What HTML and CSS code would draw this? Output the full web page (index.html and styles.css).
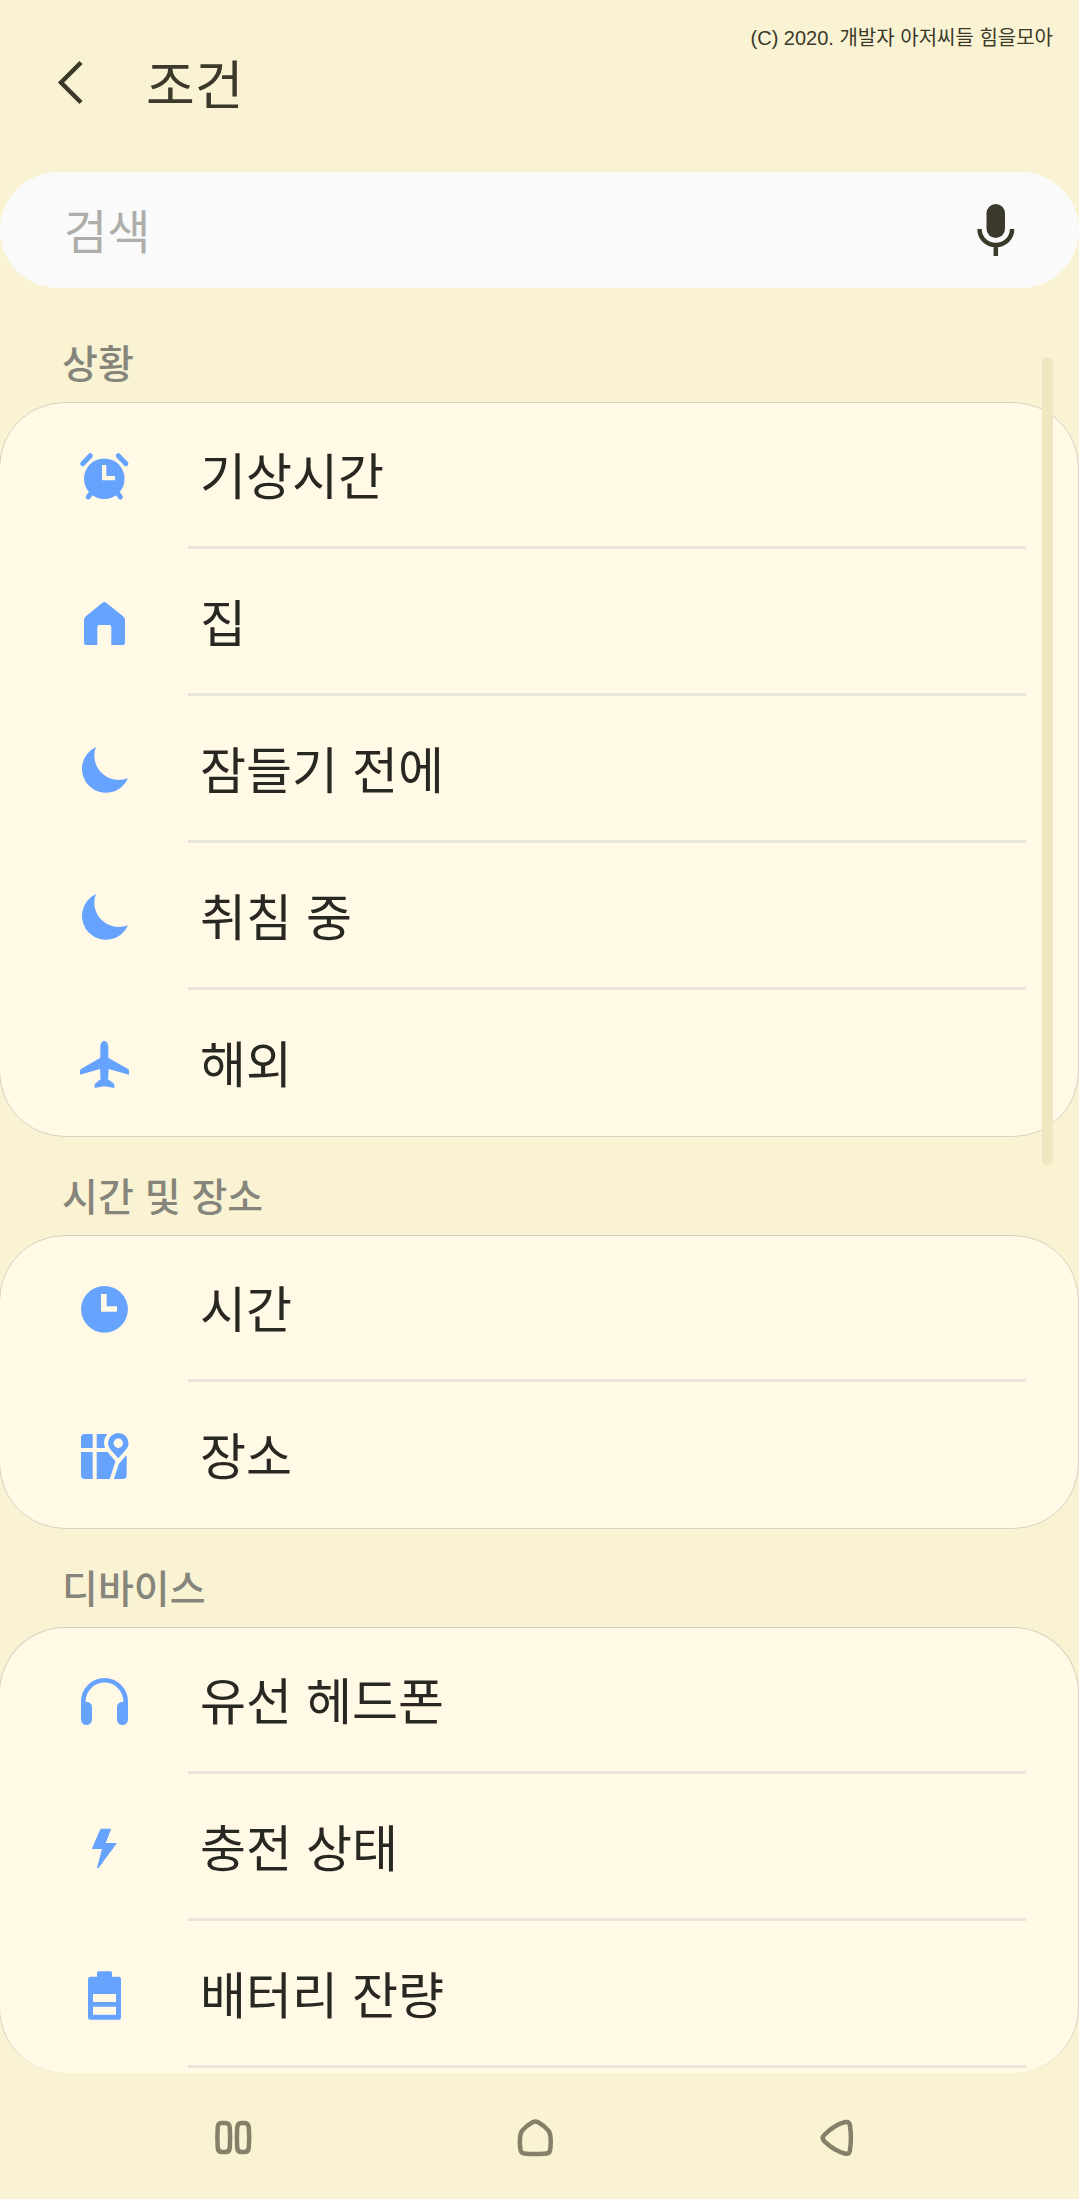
FILE: index.html
```html
<!DOCTYPE html>
<html lang="ko">
<head>
<meta charset="utf-8">
<meta name="viewport" content="width=device-width, initial-scale=1">
<title>조건</title>
<link rel="stylesheet" href="styles.css">
</head>
<body>
<header class="top-bar">
  <button class="icon-button" type="button" aria-label="뒤로">
    <svg class="icon" viewBox="0 0 54 54" aria-hidden="true"><path d="M38 7.500 18 27.500l20 20" fill="none" stroke="currentColor" stroke-width="4.500"/></svg>
  </button>
  <h1 class="title">조건</h1>
  <p class="copyright">(C) 2020. 개발자 아저씨들 힘을모아</p>
</header>

<form class="search" role="search">
  <input class="search-input" type="search" placeholder="검색" aria-label="검색">
  <button class="icon-button" type="button" aria-label="음성 검색">
    <svg class="icon" viewBox="0 0 54 54" aria-hidden="true">
      <rect x="17.500" y="1" width="18.500" height="34" rx="9.250" fill="currentColor"/>
      <path d="M10.500 26c0 9 7 16 16.300 16s16.300-7 16.300-16M26.800 42v11" fill="none" stroke="currentColor" stroke-width="4.500"/>
    </svg>
  </button>
</form>

<main class="list">
  <div class="scroll-thumb" aria-hidden="true"></div>

  <section>
    <h2 class="section-title">상황</h2>
    <ul class="card">
      <li class="row"><a class="row-link" href="#wake">
        <svg class="icon" viewBox="0 0 54 54" aria-hidden="true">
          <circle cx="27.300" cy="29.700" r="20.300" fill="currentColor"/>
          <path d="M5.700 14.700l7.600-8M48.900 14.700l-7.600-8M11.200 48l4.600-6M43.400 48l-4.600-6" stroke="currentColor" stroke-width="5" stroke-linecap="round"/>
          <path class="cutout" d="M25 16h4.300v11H38v4.300H25z"/>
        </svg><span class="row-text">기상시간</span></a></li>
      <li class="row"><a class="row-link" href="#home">
        <svg class="icon" viewBox="0 0 54 54" aria-hidden="true">
          <path fill="currentColor" d="M25.500 6.700q1.800-1.400 3.600 0l17 13.600q1.900 1.500 1.900 3.800V46.500q0 2.500-2.500 2.500H34.300V31q0-2-2-2h-10q-2 0-2 2v18H9.500Q7 49 7 46.500V24.100q0-2.300 1.900-3.800z"/>
        </svg><span class="row-text">집</span></a></li>
      <li class="row"><a class="row-link" href="#before-sleep">
        <svg class="icon" viewBox="0 0 54 54" aria-hidden="true"><path fill="currentColor" d="M18.900 4A24 24 0 1 0 51 35.300A24.500 24.500 0 0 1 18.900 4z"/></svg><span class="row-text">잠들기 전에</span></a></li>
      <li class="row"><a class="row-link" href="#sleeping">
        <svg class="icon" viewBox="0 0 54 54" aria-hidden="true"><path fill="currentColor" d="M18.900 4A24 24 0 1 0 51 35.300A24.500 24.500 0 0 1 18.900 4z"/></svg><span class="row-text">취침 중</span></a></li>
      <li class="row"><a class="row-link" href="#abroad">
        <svg class="icon" viewBox="0 0 54 54" aria-hidden="true"><path fill="currentColor" d="M27.300 4c2.300 0 4 2.500 4 6v10.700L51 32q1 .6 1 1.800v3.900L31.700 32 31 42.300l5.500 4q.9.700.9 1.700v3l-10.100-1.700L17.600 51v-3q0-1 .9-1.700l5.100-4L23 32 3 37.700v-3.900Q3 32.600 4 32l19.300-11.300V10c0-3.500 1.700-6 4-6z"/></svg><span class="row-text">해외</span></a></li>
    </ul>
  </section>

  <section>
    <h2 class="section-title">시간 및 장소</h2>
    <ul class="card">
      <li class="row"><a class="row-link" href="#time">
        <svg class="icon" viewBox="0 0 54 54" aria-hidden="true">
          <circle cx="27.500" cy="27.300" r="23.400" fill="currentColor"/>
          <path class="cutout" d="M24 12h5.700v12.300H40v5.400H24z"/>
        </svg><span class="row-text">시간</span></a></li>
      <li class="row"><a class="row-link" href="#place">
        <svg class="icon" viewBox="0 0 54 54" aria-hidden="true">
          <path fill="currentColor" d="M8 5h7.700v14H4V9q0-4 4-4zM19.700 5H33v14H19.700zM4 23h11.700v27H8q-4 0-4-4zM19.700 23H36l13.700 4v19q0 4-4 4h-26z"/>
          <path class="cutout-line" d="M41 30l-1 4-5.500 17"/>
          <path class="pin" d="M41.300 29.300C36 23 31 19 31 14.300a10.300 10.300 0 0 1 20.600 0C51.600 19 46.600 23 41.300 29.300z"/>
          <circle class="cutout" cx="41.300" cy="14.300" r="4.700"/>
        </svg><span class="row-text">장소</span></a></li>
    </ul>
  </section>

  <section>
    <h2 class="section-title">디바이스</h2>
    <ul class="card card-continued">
      <li class="row"><a class="row-link" href="#headphones">
        <svg class="icon" viewBox="0 0 54 54" aria-hidden="true">
          <path d="M6.300 40V27.500a21.200 21.200 0 0 1 42.400 0V40" fill="none" stroke="currentColor" stroke-width="4.600"/>
          <path fill="currentColor" d="M4 28h5.500q5.500 0 5.500 5.500v12a5.500 5.500 0 0 1-11 0zM51 28h-5.500q-5.500 0-5.500 5.500v12a5.500 5.500 0 0 0 11 0z"/>
        </svg><span class="row-text">유선 헤드폰</span></a></li>
      <li class="row"><a class="row-link" href="#charging">
        <svg class="icon" viewBox="0 0 54 54" aria-hidden="true"><path fill="currentColor" stroke="currentColor" stroke-width="1" stroke-linejoin="round" d="M23.800 8.200h9.700L28 22.500h11.200L21 47l-.5-.2L25.600 27.500H15.500z"/></svg><span class="row-text">충전 상태</span></a></li>
      <li class="row"><a class="row-link" href="#battery">
        <svg class="icon" viewBox="0 0 54 54" aria-hidden="true">
          <path fill="currentColor" d="M21.500 3.300h12q1.500 0 1.500 1.500v3.900h6.500q2.500 0 2.500 2.500v38q0 2.500-2.500 2.500h-28q-2.500 0-2.500-2.500v-38q0-2.500 2.500-2.500h6.500V4.800q0-1.500 1.500-1.500z"/>
          <path class="cutout" d="M16 26h23v8H16zM16 38.700h23v8H16z"/>
        </svg><span class="row-text">배터리 잔량</span></a></li>
    </ul>
  </section>
</main>

<nav class="system-nav" aria-label="시스템 탐색">
  <button class="icon-button" type="button" aria-label="최근 앱">
    <svg class="icon" viewBox="0 0 54 54" aria-hidden="true"><g fill="none" stroke="currentColor" stroke-width="4.500"><path d="M15 12q2.500 0 4.500 0 4 0 4.300 4.500.6 10 0 20-.3 4.500-4.300 4.500h-3.500q-4 0-4.300-4.500-.6-10 0-20 .3-4.500 3.300-4.500z"/><path d="M35.500 12h3q4 0 4.300 4.500.8 10 0 20-.3 4.500-4.300 4.500h-3q-4 0-4.300-4.500-.6-10 0-20 .3-4.500 4.300-4.500z"/></g></svg>
  </button>
  <button class="icon-button" type="button" aria-label="홈">
    <svg class="icon" viewBox="0 0 54 54" aria-hidden="true"><path fill="none" stroke="currentColor" stroke-width="4.500" stroke-linejoin="round" d="M24.500 11.300q2.800-1.500 5.600 0Q36 14.500 40.400 19.600 43 23 42.700 32q0 3.500-.6 7-.5 3-3.600 3.400-11.200 1.200-22.400 0-3.100-.4-3.600-3.400-.6-3.500-.6-7-.3-9 2.300-12.400Q18.600 14.500 24.500 11.300z"/></svg>
  </button>
  <button class="icon-button" type="button" aria-label="이전">
    <svg class="icon" viewBox="0 0 54 54" aria-hidden="true"><path fill="none" stroke="currentColor" stroke-width="4.500" stroke-linejoin="round" d="M35.500 11Q25 13.200 14.200 24q-2.900 3.100 0 6.200Q25 40.600 35.500 42.700q3.600.6 4.400-3 2-12.800 0-25.600-.8-3.700-4.400-3.100z"/></svg>
  </button>
</nav>
</body>
</html>
```

FILE: styles.css
```css
:root {
  --page: #faf3d3;
  --card: #fff9e6;
  --line: #d6d2c3;
  --divider: #e8e5df;
  --accent: #66a3ff;
  --heading: #3b392a;
  --text: #292722;
}

* {
  box-sizing: border-box;
}

body {
  margin: 0;
  background: var(--page);
  color: var(--text);
  font-family: "Noto Sans CJK KR", sans-serif;
}

h1,
h2,
p,
ul {
  margin: 0;
  padding: 0;
}

.icon {
  display: block;
  flex: none;
  width: 54px;
  height: 54px;
}

.icon-button {
  padding: 0;
  border: 0;
  background: none;
  color: inherit;
}

.top-bar {
  display: flex;
  align-items: center;
  height: 172px;
  padding: 0 26px 8px 43px;
  color: var(--heading);
}

.title {
  margin-left: 49px;
  font-size: 53px;
  font-weight: 400;
  line-height: 80px;
}

.copyright {
  align-self: flex-start;
  margin: 23px 0 0 auto;
  font-family: "Liberation Sans", "Noto Sans CJK KR", sans-serif;
  font-size: 20px;
  line-height: 30px;
}

.search {
  display: flex;
  align-items: center;
  height: 116px;
  padding: 0 56px 0 64px;
  border-radius: 58px;
  background: #fafafa;
  color: var(--heading);
}

.search-input {
  flex: 1;
  min-width: 0;
  padding: 0 0 3px;
  border: 0;
  outline: 0;
  background: none;
  color: inherit;
  font: 47px/70px "Noto Sans CJK KR", sans-serif;
}

.search-input::placeholder {
  color: #aeada9;
}

.list {
  position: relative;
  padding-top: 16px;
}

.scroll-thumb {
  position: absolute;
  top: 69px;
  right: 26px;
  width: 11px;
  height: 808px;
  border-radius: 6px;
  background: #efe7bf;
}

.section-title {
  padding: 29px 62px 13px;
  color: #86857b;
  font-size: 39px;
  font-weight: 500;
  line-height: 56px;
}

.card {
  margin-left: -1px;
  border: 1px solid var(--line);
  border-radius: 66px;
  background: var(--card);
  list-style: none;
}

.row {
  padding: 0 52px 0 77px;
}

.row-link {
  display: flex;
  align-items: center;
  height: 147px;
  color: inherit;
  text-decoration: none;
}

.row:first-child {
  margin-top: -1px;
}

.row:last-child {
  margin-bottom: -1px;
}

.row .icon {
  color: var(--accent);
}

.row-text {
  display: flex;
  flex: 1;
  align-items: center;
  align-self: stretch;
  margin-left: 57px;
  padding: 0 0 2px 12px;
  border-bottom: 3px solid var(--divider);
  font-size: 50px;
  line-height: 72px;
}

.row:last-child .row-text {
  border-bottom-color: transparent;
}

.card-continued {
  padding-bottom: 6px;
  border-bottom: 0;
}

.card-continued .row:last-child .row-text {
  border-bottom-color: var(--divider);
}

.cutout {
  fill: var(--card);
}

.cutout-line {
  fill: none;
  stroke: var(--card);
  stroke-width: 4;
}

.pin {
  fill: currentColor;
  stroke: var(--card);
  stroke-width: 8;
  paint-order: stroke;
}

.system-nav {
  display: grid;
  grid-template-columns: repeat(3, 1fr);
  place-items: center;
  height: 126px;
  padding: 3px 91px 0 82px;
  color: #858168;
}
```
